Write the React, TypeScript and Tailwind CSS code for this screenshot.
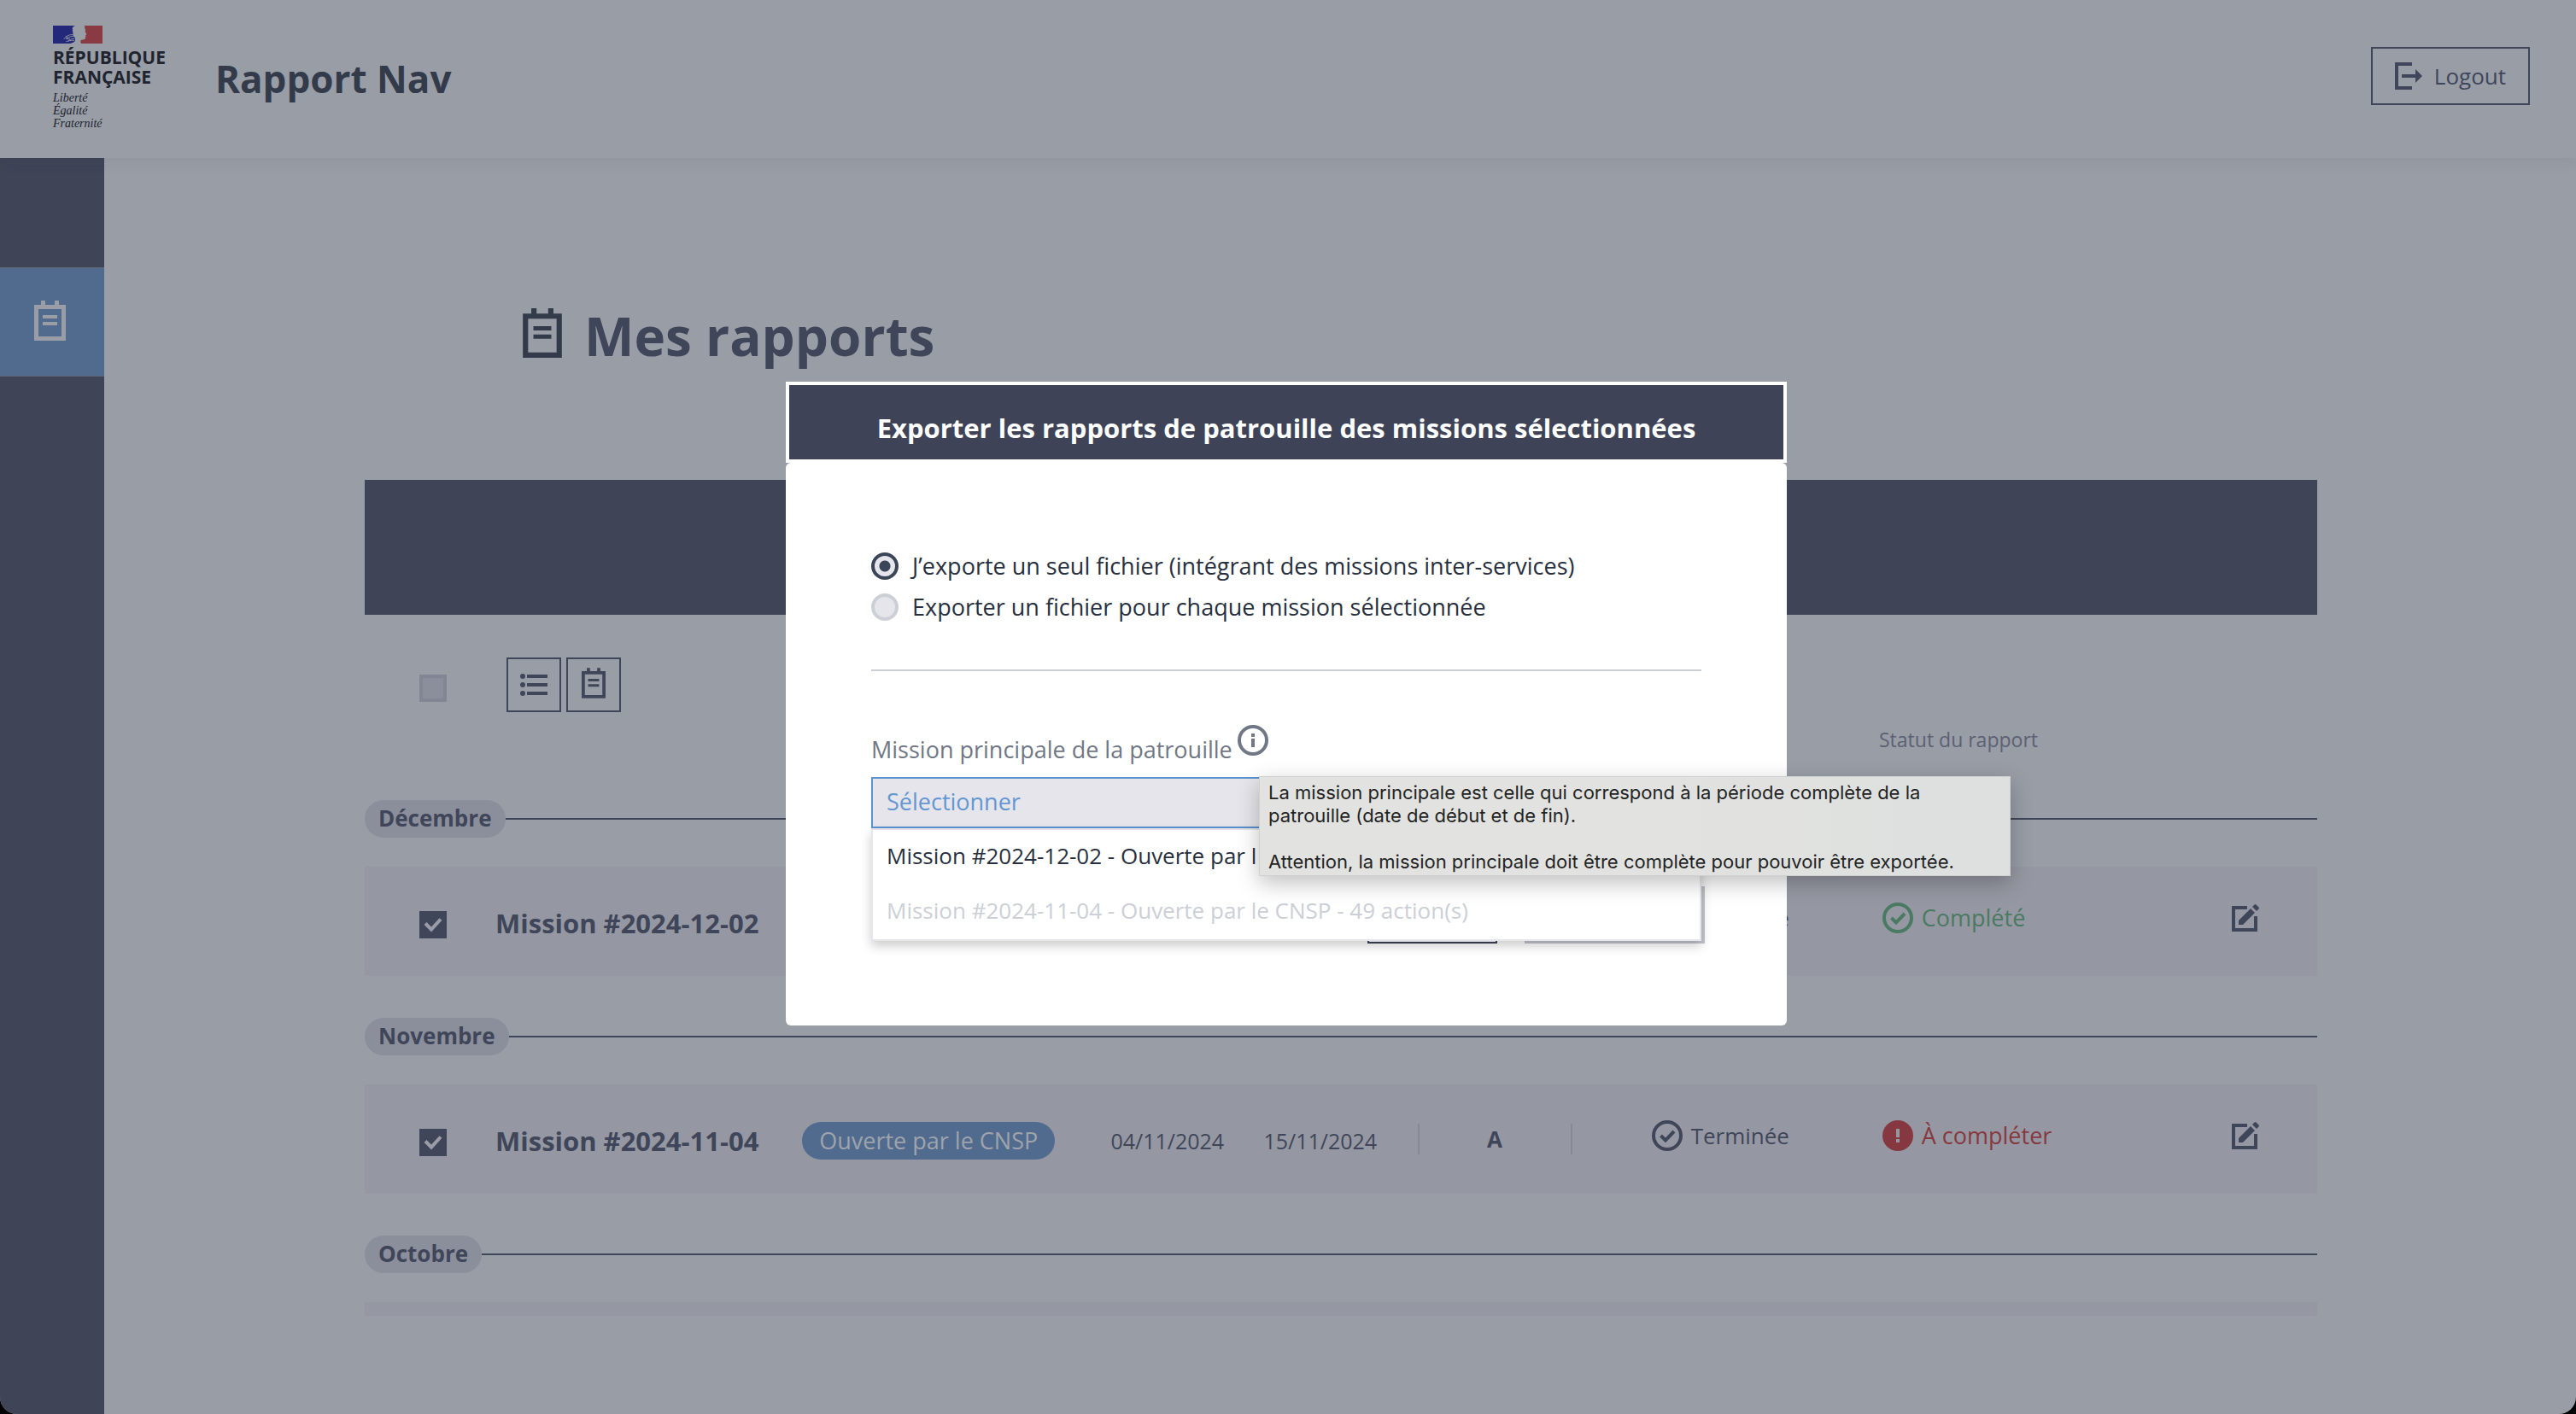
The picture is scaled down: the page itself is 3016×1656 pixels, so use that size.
import React from "react";

type Status = "done" | "todo";

interface Mission {
  name: string;
  badge?: string;
  start?: string;
  end?: string;
  crew?: string;
  status: Status;
}

interface Month {
  label: string;
  mission?: Mission;
}

const MONTHS: Month[] = [
  { label: "Décembre", mission: { name: "Mission #2024-12-02", status: "done" } },
  {
    label: "Novembre",
    mission: {
      name: "Mission #2024-11-04",
      badge: "Ouverte par le CNSP",
      start: "04/11/2024",
      end: "15/11/2024",
      crew: "A",
      status: "todo",
    },
  },
  { label: "Octobre" },
];

function NoteIcon({ className }: { className: string }) {
  return (
    <svg viewBox="0 0 37 47" className={className} fill="currentColor" aria-hidden="true">
      <path fillRule="evenodd" d="M0 5H8V0H13V5H24V0H29V5H37V47H0ZM5 10V42H32V10Z" />
      <path d="M10 17H27V21H10ZM10 25H27V29H10Z" />
    </svg>
  );
}

function ListIcon() {
  return (
    <svg viewBox="0 0 32 26" className="h-[26px] w-8" fill="currentColor" aria-hidden="true">
      <circle cx="3" cy="3" r="3" />
      <circle cx="3" cy="13" r="3" />
      <circle cx="3" cy="23" r="3" />
      <path d="M8 1H32V5H8ZM8 11H32V15H8ZM8 21H32V25H8Z" />
    </svg>
  );
}

function LogoutIcon() {
  return (
    <svg viewBox="0 0 32 32" className="size-8" fill="currentColor" aria-hidden="true">
      <path d="M0 0H20V4H4V28H20V32H0Z" />
      <path d="M8 14H24V8L32 16L24 24V18H8Z" />
    </svg>
  );
}

function CheckCircleIcon() {
  return (
    <svg viewBox="0 0 36 36" className="size-9" fill="none" stroke="currentColor" strokeWidth="4" aria-hidden="true">
      <circle cx="18" cy="18" r="16" />
      <path d="M10.5 18L16 23.5L26 13" />
    </svg>
  );
}

function AttentionIcon() {
  return (
    <svg viewBox="0 0 36 36" className="size-9" aria-hidden="true">
      <circle cx="18" cy="18" r="18" fill="currentColor" />
      <path d="M16 10H20V20H16ZM16 22H20V26H16Z" fill="#9598a2" />
    </svg>
  );
}

function InfoIcon() {
  return (
    <svg viewBox="0 0 36 36" className="size-9" aria-hidden="true">
      <circle cx="18" cy="18" r="16" fill="none" stroke="currentColor" strokeWidth="4" />
      <path d="M16 10H20V14H16ZM16 16H20V26H16Z" fill="currentColor" />
    </svg>
  );
}

function EditIcon() {
  return (
    <svg viewBox="0 0 32 32" className="size-8" fill="currentColor" aria-hidden="true">
      <path d="M0 2H18V6H4V28H26V14H30V32H0Z" />
      <path d="M8 19L22 5L27 10L13 24H8Z" />
      <path d="M24 3L26.5 0.5Q27.500 -0.400 28.500 0.500L31.500 3.500Q32.400 4.500 31.500 5.500L29 8Z" />
    </svg>
  );
}

function RepublicLogo() {
  return (
    <div className="text-[#20242f]">
      <svg viewBox="38 30 174 63" className="h-[21px] w-[58px]" aria-hidden="true">
        <path
          fill="#24287a"
          d="M38 30H117C110 32 106 36 106 42L108 46L105 49L109 52L107 57L110 59L109 66L113 70L116 74V84Q108 92 98 93H38Z"
        />
        <path
          fill="#8a3a42"
          d="M147 30H212V93H137Q133 87 136 81L146 79L152 77L151 71L154 69L152 65L156 60L151 51L152 44L149 38L151 34Z"
        />
        <path
          fill="none"
          stroke="#9a9da6"
          strokeWidth="2.500"
          d="M112 62Q98 60 88 66L76 78M112 68Q100 66 92 72L84 76L98 78M114 76Q102 74 92 84M114 82Q104 80 84 86M90 70L82 68"
        />
      </svg>
      <p className="mt-[5px] text-[21px] leading-[23px] font-bold">
        RÉPUBLIQUE
        <br />
        FRANÇAISE
      </p>
      <p className="mt-[5px] font-['Liberation_Serif',serif] text-[14px] leading-[15px] italic">
        Liberté
        <br />
        Égalité
        <br />
        Fraternité
      </p>
    </div>
  );
}

function Checkbox({ label, checked }: { label: string; checked: boolean }) {
  return (
    <span className="relative flex size-8">
      <input
        type="checkbox"
        aria-label={label}
        defaultChecked={checked}
        className="peer size-8 appearance-none border-4 border-transparent bg-[#8b8e9b] not-checked:border-[#828594] checked:border-[#404659] checked:bg-[#404659]"
      />
      <svg
        viewBox="0 0 32 32"
        className="pointer-events-none absolute inset-0 hidden size-8 peer-checked:block"
        fill="none"
        stroke="#9a9da6"
        strokeWidth="4"
        aria-hidden="true"
      >
        <path d="M7 14.500L14 21.500L25 9.500" />
      </svg>
    </span>
  );
}

function MissionRow({ mission }: { mission: Mission }) {
  return (
    <article className="grid h-32 grid-cols-[89fr_359fr_361fr_179fr_180fr_181fr_363fr_441fr] items-center bg-[#9598a2] pr-[68px] pl-16 text-[27px] leading-9 text-[#404659]">
      <div className="pt-2">
        <Checkbox label={mission.name} checked />
      </div>
      <h2 className="pt-1 text-[31px] leading-10 font-bold whitespace-nowrap">{mission.name}</h2>
      <div className="flex pt-1">
        {mission.badge && (
          <span className="rounded-full bg-[#516b8f] px-5 py-1 whitespace-nowrap text-[#9fa3ac]">
            {mission.badge}
          </span>
        )}
      </div>
      <div className="pt-1 text-[25px]">{mission.start}</div>
      <div className="pt-1 text-[25px]">{mission.end}</div>
      {mission.crew ? (
        <div className="border-x-2 border-[#858995] text-center text-[26px] font-bold">{mission.crew}</div>
      ) : (
        <div />
      )}
      <div className="flex items-center gap-[10px] pb-2 pl-[93px]">
        <CheckCircleIcon />
        <span className="text-[26px] font-medium">Terminée</span>
      </div>
      <div className="flex items-center justify-between pb-2">
        {mission.status === "done" ? (
          <span className="flex items-center gap-[10px] font-medium text-[#4a7a61]">
            <CheckCircleIcon />
            Complété
          </span>
        ) : (
          <span className="flex items-center gap-[10px] font-medium text-[#863840]">
            <AttentionIcon />À compléter
          </span>
        )}
        <button type="button" aria-label={`Modifier ${mission.name}`}>
          <EditIcon />
        </button>
      </div>
    </article>
  );
}

function MonthSection({ month }: { month: Month }) {
  return (
    <section className="mb-[49px]">
      <div className="flex items-center">
        <h3 className="rounded-full bg-[#8b8e9b] px-4 pt-[3px] pb-[5px] text-[26px] leading-9 font-bold text-[#404659]">
          {month.label}
        </h3>
        <div className="h-[2px] flex-1 bg-[#404659]" />
      </div>
      <div className="mt-[34px]">
        {month.mission ? <MissionRow mission={month.mission} /> : <div className="h-4 bg-[#9598a2]" />}
      </div>
    </section>
  );
}

function RadioOption({ id, label, checked }: { id: string; label: string; checked?: boolean }) {
  return (
    <div className="flex h-8 items-center gap-4">
      <input
        type="radio"
        id={id}
        name="export-mode"
        defaultChecked={checked}
        className="size-8 appearance-none rounded-full border-4 border-[#cccfd6] bg-[#e5e5eb] checked:border-[#3b4559] checked:bg-[radial-gradient(circle,#3b4559_6px,#e5e5eb_7px)]"
      />
      <label htmlFor={id} className="text-[27px] leading-8 font-medium whitespace-nowrap text-[#282f3e]">
        {label}
      </label>
    </div>
  );
}

function ExportDialog() {
  return (
    <div className="absolute inset-0 flex items-start justify-center pt-[447px] pr-1">
      <div role="dialog" aria-modal="true" aria-labelledby="export-title" className="w-[1172px]">
        <header className="border-4 border-white bg-[#3e4357] pt-8 pb-[19px] text-center">
          <h2 id="export-title" className="text-[31px] leading-9 font-bold text-white">
            Exporter les rapports de patrouille des missions sélectionnées
          </h2>
        </header>
        <div className="rounded-[6px] bg-white px-[100px] pt-[105px] pb-24">
          <fieldset className="flex flex-col gap-4">
            <RadioOption id="single" label="J’exporte un seul fichier (intégrant des missions inter-services)" checked />
            <RadioOption id="multiple" label="Exporter un fichier pour chaque mission sélectionnée" />
          </fieldset>
          <hr className="mt-[57px] border-t-2 border-[#cccfd6]" />
          <div className="mt-[63px] flex items-start gap-[6px] text-[#707785]">
            <label htmlFor="main-mission" className="pt-[11px] text-[27px] leading-9">
              Mission principale de la patrouille
            </label>
            <InfoIcon />
          </div>
          <div className="relative mt-[14px]">
            <select
              id="main-mission"
              defaultValue=""
              className="block h-[60px] w-full appearance-none border-2 border-[#5b93d0] bg-[#e5e5eb] px-4 pb-[2px] text-[27px] text-[#6497d2]"
            >
              <option value="">Sélectionner</option>
            </select>
            <ul
              role="listbox"
              aria-label="Missions"
              className="absolute inset-x-0 top-full z-10 border-2 border-[#e5e5eb] bg-white text-[26px] leading-9 whitespace-nowrap shadow-[0_6px_12px_rgba(0,0,0,0.2)]"
            >
              <li role="option" aria-selected="false" className="px-4 pt-3 pb-4 text-[#282f3e]">
                Mission #2024-12-02 - Ouverte par l
              </li>
              <li role="option" aria-selected="false" aria-disabled="true" className="px-4 pt-3 pb-4 text-[#cccfd6]">
                Mission #2024-11-04 - Ouverte par le CNSP - 49 action(s)
              </li>
            </ul>
            <div
              role="tooltip"
              className="absolute -top-px left-[454px] z-20 w-[880px] border border-[#cfd0d0] bg-linear-to-r from-[#e2e2e0] from-50% to-[#dde0df] pt-[5px] pr-10 pb-[2px] pl-[10px] font-['Inter',sans-serif] text-[22px] leading-[27px] text-[#222424] shadow-[0_8px_24px_rgba(0,0,0,0.25)]"
            >
              <p>La mission principale est celle qui correspond à la période complète de la patrouille (date de début et de fin).</p>
              <p className="mt-[27px] whitespace-nowrap">
                Attention, la mission principale doit être complète pour pouvoir être exportée.
              </p>
            </div>
          </div>
          <div className="-mr-1 mt-[68px] flex justify-end gap-8">
            <button type="button" aria-label="Annuler" className="h-[67px] w-[152px] border-2 border-[#3b4559]" />
            <button type="button" aria-label="Exporter" disabled className="h-[67px] w-[211px] bg-[#c4c6ce]" />
          </div>
        </div>
      </div>
    </div>
  );
}

export default function App() {
  return (
    <div className="bg-black font-['Open_Sans',sans-serif]">
      <div className="relative flex min-h-screen flex-col overflow-hidden rounded-b-[20px] bg-[#999da6]">
        <header className="z-10 flex h-[185px] items-start justify-between bg-[#999da6] pr-[54px] pl-[62px] shadow-[0_4px_16px_rgba(40,47,62,0.07)]">
          <div className="flex items-start">
            <div className="w-[190px] pt-[30px]">
              <RepublicLogo />
            </div>
            <p className="pt-[62px] text-[44px] leading-[60px] font-bold text-[#333b4b]">Rapport Nav</p>
          </div>
          <button
            type="button"
            className="mt-[55px] flex h-[68px] items-center gap-[14px] border-2 border-[#404659] px-[26px] text-[26px] text-[#404659]"
          >
            <LogoutIcon />
            Logout
          </button>
        </header>

        <div className="flex flex-1">
          <nav className="w-[122px] bg-[#3f4457] pt-32">
            <a
              href="#rapports"
              aria-label="Mes rapports"
              className="flex h-32 items-center border-y border-[#5f6573] bg-[#516b8f] pb-1 pl-10 text-[#9a9da6]"
            >
              <NoteIcon className="h-[47px] w-[37px]" />
            </a>
          </nav>

          <main className="flex-1 pr-[303px] pl-[305px]">
            <div className="flex items-start gap-[26px] pt-[176px] pl-[185px]">
              <NoteIcon className="h-[58px] w-[46px] text-[#333b4b]" />
              <h1 className="text-[62px] leading-[64px] font-bold text-[#404659]">Mes rapports</h1>
            </div>
            <div className="mt-[137px] h-[158px] bg-[#3f4457]" />

            <div className="grid grid-cols-[102fr_1607fr_445fr] items-start pr-[68px] pl-16 pt-[50px] text-[#404659]">
              <div className="pt-5">
                <Checkbox label="Tout sélectionner" checked={false} />
              </div>
              <div className="flex gap-[6px]">
                <button
                  type="button"
                  aria-label="Vue liste"
                  className="flex size-16 items-center justify-center border-2 border-[#404659]"
                >
                  <ListIcon />
                </button>
                <button
                  type="button"
                  aria-label="Vue rapports"
                  className="flex size-16 items-center justify-center border-2 border-[#404659] pb-1"
                >
                  <NoteIcon className="h-9 w-7" />
                </button>
              </div>
              <p className="pt-20 text-[23px] leading-8 text-[#5c6173]">Statut du rapport</p>
            </div>

            <div className="mt-[55px]">
              {MONTHS.map((month) => (
                <MonthSection key={month.label} month={month} />
              ))}
            </div>
          </main>
        </div>

        <ExportDialog />
      </div>
    </div>
  );
}
